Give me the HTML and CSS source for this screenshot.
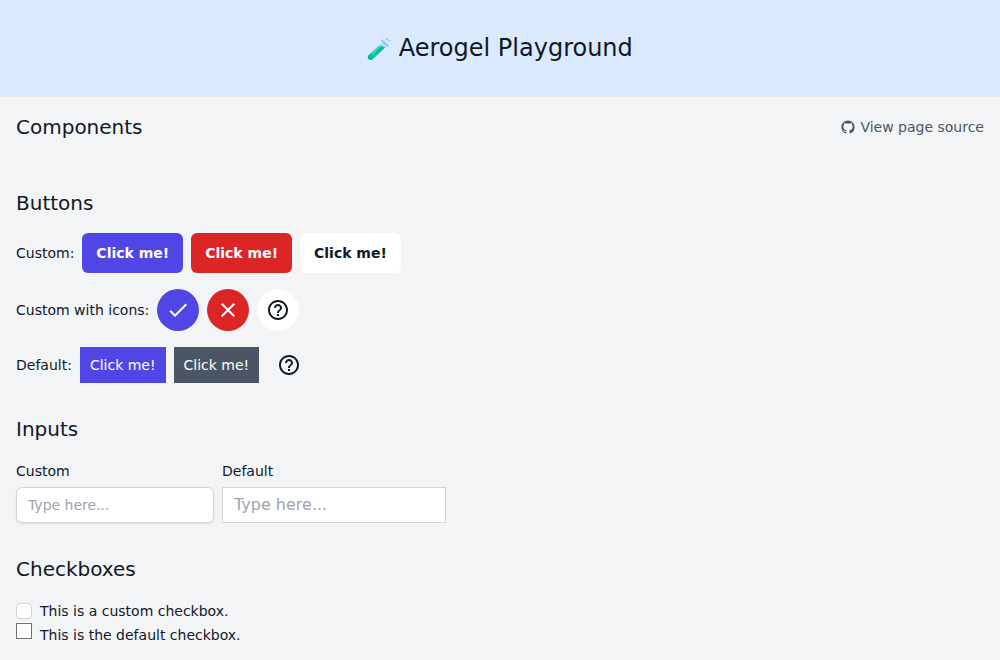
FILE: index.html
```html
<!DOCTYPE html>
<html lang="en">
<head>
<meta charset="utf-8">
<title>Aerogel Playground</title>
<link rel="stylesheet" href="styles.css">
</head>
<body>
<header class="header">
  <h1 class="title">
    <svg class="tube" viewBox="0 0 24 24" aria-hidden="true">
      <path d="M16.200 4.500 20.300 8.500 5.600 22.300C4.500 23.400 2.700 23.300 1.600 22.200S.500 19.400 1.600 18.300z" fill="#b5dff8"/>
      <path d="M12 8.700 18.400 10.200 5.600 22.300C4.500 23.400 2.700 23.300 1.600 22.200S.500 19.400 1.600 18.300z" fill="#00bfa5"/>
      <path d="M14.500 7.800 5.500 16.700" stroke="#6ee0ca" stroke-width="1.100" stroke-linecap="round"/>
      <path d="m15.200 3.600 5.900 5.600" stroke="#82b1ff" stroke-width="1.500" stroke-linecap="round"/>
      <path d="m16.800 3.400 4.400 4.200" stroke="#b9e4ff" stroke-width="1.800" stroke-linecap="round"/>
      <path d="m19.600 2 1-.2m1.300 1.500.8.300" stroke="#55dbc5" stroke-width="1.300" stroke-linecap="round"/>
    </svg>
    <span>Aerogel Playground</span>
  </h1>
</header>
<main class="main">
  <div class="page-heading">
    <h2 class="heading">Components</h2>
    <a class="source">
      <svg class="github" viewBox="0 0 24 24" aria-hidden="true"><path fill="currentColor" d="M12 1C5.700 1 .600 6.100.600 12.400c0 5 3.200 9.200 7.600 10.700.600.100.9-.300.9-.700v-2.100c-3.100.700-3.900-1.100-4.300-1.900-.300-.500-.700-.900-1-1.200 1.700-.300 2.300 1.200 3.100 1.700.700.400 1.600.300 2.300 0 .100-.700.400-1.100.7-1.400-3.400-.500-5.900-2.100-5.900-6 0-1.500.500-2.700 1.300-3.600-.200-.9-.200-1.900.1-2.700 1.200 0 2.200.500 3.100 1.100 2.200-.500 4.800-.5 7 0 .9-.600 1.900-1.100 3.100-1.100.300.8.300 1.800.1 2.700.8.900 1.300 2.100 1.300 3.600 0 3.900-2.500 5.500-5.900 6 .500.500.8 1.100.8 2.100v2.800c0 .400.300.8.9.7 4.400-1.500 7.600-5.700 7.600-10.700C23.400 6.100 18.300 1 12 1"/></svg>
      <span>View page source</span>
    </a>
  </div>

  <section class="section">
    <h3 class="heading">Buttons</h3>
    <div class="rows">
      <div class="row">
        <span>Custom:</span>
        <button class="button primary">Click me!</button>
        <button class="button danger">Click me!</button>
        <button class="button light">Click me!</button>
      </div>
      <div class="row">
        <span>Custom with icons:</span>
        <button class="round primary" aria-label="Confirm"><svg class="icon" viewBox="0 0 24 24"><path d="M9 16.170 4.830 12l-1.420 1.410L9 19 21 7l-1.410-1.410z"/></svg></button>
        <button class="round danger" aria-label="Close"><svg class="icon" viewBox="0 0 24 24"><path d="M19 6.410 17.590 5 12 10.590 6.410 5 5 6.410 10.590 12 5 17.590 6.410 19 12 13.410 17.590 19 19 17.590 13.410 12z"/></svg></button>
        <button class="round light" aria-label="Help"><svg class="icon" viewBox="0 0 24 24"><path d="M11 18h2v-2h-2v2zm1-16C6.480 2 2 6.480 2 12s4.480 10 10 10 10-4.480 10-10S17.520 2 12 2zm0 18c-4.410 0-8-3.590-8-8s3.590-8 8-8 8 3.590 8 8-3.590 8-8 8zm0-14c-2.210 0-4 1.790-4 4h2c0-1.100.900-2 2-2s2 .900 2 2c0 2-3 1.750-3 5h2c0-2.250 3-2.500 3-5 0-2.210-1.790-4-4-4z"/></svg></button>
      </div>
      <div class="row">
        <span>Default:</span>
        <button class="plain primary">Click me!</button>
        <button class="plain secondary">Click me!</button>
        <button class="plain clear" aria-label="Help"><svg class="icon" viewBox="0 0 24 24"><path d="M11 18h2v-2h-2v2zm1-16C6.480 2 2 6.480 2 12s4.480 10 10 10 10-4.480 10-10S17.520 2 12 2zm0 18c-4.410 0-8-3.590-8-8s3.590-8 8-8 8 3.590 8 8-3.590 8-8 8zm0-14c-2.210 0-4 1.790-4 4h2c0-1.100.900-2 2-2s2 .900 2 2c0 2-3 1.750-3 5h2c0-2.250 3-2.500 3-5 0-2.210-1.790-4-4-4z"/></svg></button>
      </div>
    </div>
  </section>

  <section class="section">
    <h3 class="heading">Inputs</h3>
    <div class="fields">
      <label class="field"><span>Custom</span><input class="input custom-input" placeholder="Type here..."></label>
      <label class="field"><span>Default</span><input class="input default-input" placeholder="Type here..."></label>
    </div>
  </section>

  <section class="section">
    <h3 class="heading">Checkboxes</h3>
    <div class="checks">
      <label class="check"><input type="checkbox" class="box custom-box"><span>This is a custom checkbox.</span></label>
      <label class="check check-default"><input type="checkbox" class="box default-box"><span>This is the default checkbox.</span></label>
    </div>
  </section>
</main>
</body>
</html>
```
FILE: styles.css
```css
* { box-sizing: border-box; margin: 0; }
html { overflow: hidden; }
body {
  background: #f3f4f6;
  color: #111827;
  font: 14px/20px "DejaVu Sans", sans-serif;
}
svg { display: block; fill: none; }
button, input { font: inherit; border: 0; padding: 0; }
.header {
  display: flex;
  align-items: center;
  justify-content: center;
  height: 97px;
  background: #dbeafe;
  border-bottom: 1px solid #e5e7eb;
}
.title {
  display: flex;
  align-items: center;
  gap: 7.6px;
  font-size: 24px;
  line-height: 32px;
  font-weight: 400;
}
.tube { width: 24px; height: 24px; margin-top: 1px; }
.main { padding: 16px; }
.page-heading { display: flex; align-items: center; justify-content: space-between; margin-bottom: 48px; }
.heading { font-size: 20px; line-height: 28px; font-weight: 400; }
.source { display: flex; align-items: center; gap: 5px; color: #4b5563; }
.github { width: 14px; height: 14px; }
.section { margin-bottom: 32px; }
.rows { display: flex; flex-direction: column; gap: 16px; margin-top: 16px; }
.row { display: flex; align-items: center; gap: 8px; }
.button { height: 40px; padding: 0 14px; border-radius: 6px; font-weight: 600; }
.round { display: flex; align-items: center; justify-content: center; width: 42px; height: 42px; border-radius: 50%; }
.plain { height: 36px; padding: 0 10px; }
.icon { width: 24px; height: 24px; fill: currentColor; }
.primary { background: #4f46e5; color: #fff; }
.danger { background: #dc2626; color: #fff; }
.light { background: #fff; color: #111827; }
.secondary { background: #4b5563; color: #fff; }
.clear { background: transparent; color: #111827; }
.fields { display: flex; gap: 8px; margin-top: 18px; }
.field { display: flex; flex-direction: column; gap: 6px; }
.input { height: 36px; padding: 0 11px; border: 1px solid #d1d5db; background: #fff; }
.input::placeholder { color: #9ca3af; opacity: 1; }
.custom-input { width: 198px; border-radius: 6px; box-shadow: 0 1px 2px rgba(0, 0, 0, .1); }
.default-input { width: 224px; padding-bottom: 2px; font-size: 16px; }
.checks { display: flex; flex-direction: column; gap: 4px; margin-top: 18px; }
.check { display: flex; align-items: center; gap: 8px; }
.check-default { align-items: flex-start; }
.box { appearance: none; width: 16px; height: 16px; margin: 0; background: #fff; border: 1px solid #d1d5db; }
.custom-box { border-radius: 4px; }
.default-box { border-color: #6b7280; margin-top: -2px; }
```
